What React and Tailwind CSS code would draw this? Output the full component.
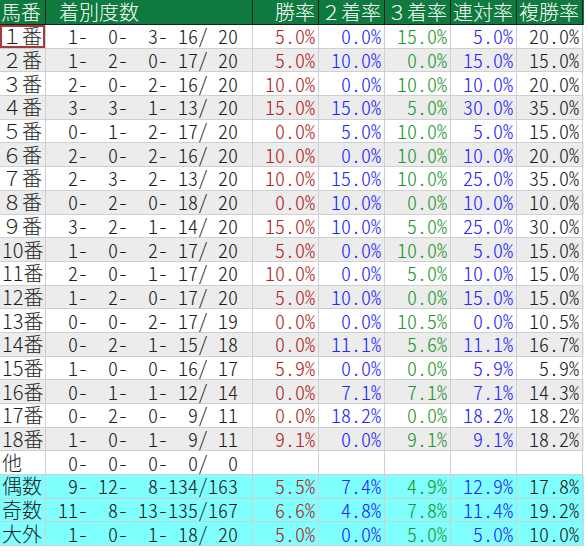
const rows = [
  ["１番", [1, 0, 3, 16, 20], ["5.0", "0.0", "15.0", "5.0", "20.0"]],
  ["２番", [1, 2, 0, 17, 20], ["5.0", "10.0", "0.0", "15.0", "15.0"]],
  ["３番", [2, 0, 2, 16, 20], ["10.0", "0.0", "10.0", "10.0", "20.0"]],
  ["４番", [3, 3, 1, 13, 20], ["15.0", "15.0", "5.0", "30.0", "35.0"]],
  ["５番", [0, 1, 2, 17, 20], ["0.0", "5.0", "10.0", "5.0", "15.0"]],
  ["６番", [2, 0, 2, 16, 20], ["10.0", "0.0", "10.0", "10.0", "20.0"]],
  ["７番", [2, 3, 2, 13, 20], ["10.0", "15.0", "10.0", "25.0", "35.0"]],
  ["８番", [0, 2, 0, 18, 20], ["0.0", "10.0", "0.0", "10.0", "10.0"]],
  ["９番", [3, 2, 1, 14, 20], ["15.0", "10.0", "5.0", "25.0", "30.0"]],
  ["10番", [1, 0, 2, 17, 20], ["5.0", "0.0", "10.0", "5.0", "15.0"]],
  ["11番", [2, 0, 1, 17, 20], ["10.0", "0.0", "5.0", "10.0", "15.0"]],
  ["12番", [1, 2, 0, 17, 20], ["5.0", "10.0", "0.0", "15.0", "15.0"]],
  ["13番", [0, 0, 2, 17, 19], ["0.0", "0.0", "10.5", "0.0", "10.5"]],
  ["14番", [0, 2, 1, 15, 18], ["0.0", "11.1", "5.6", "11.1", "16.7"]],
  ["15番", [1, 0, 0, 16, 17], ["5.9", "0.0", "0.0", "5.9", "5.9"]],
  ["16番", [0, 1, 1, 12, 14], ["0.0", "7.1", "7.1", "7.1", "14.3"]],
  ["17番", [0, 2, 0, 9, 11], ["0.0", "18.2", "0.0", "18.2", "18.2"]],
  ["18番", [1, 0, 1, 9, 11], ["9.1", "0.0", "9.1", "9.1", "18.2"]],
  ["他", [0, 0, 0, 0, 0], null],
  ["偶数", [9, 12, 8, 134, 163], ["5.5", "7.4", "4.9", "12.9", "17.8"], true],
  ["奇数", [11, 8, 13, 135, 167], ["6.6", "4.8", "7.8", "11.4", "19.2"], true],
  ["大外", [1, 0, 1, 18, 20], ["5.0", "0.0", "5.0", "5.0", "10.0"], true],
];

const rateColors = [
  "text-[#b22222]",
  "text-[#2424ff]",
  "text-[#23962b]",
  "text-[#2424ff]",
  "text-[#1c1c1c]",
];

const headers = ["勝率", "２着率", "３着率", "連対率", "複勝率"];

const cols = "grid grid-cols-[46px_207px_66px_66px_66px_66px_66px]";
// half-width digits so numbers line up like a fixed-pitch font
const half = "[font-feature-settings:'hwid']";

const Row = ({ row, index }) => {
  const [label, counts, rates, summary] = row;
  const bg = summary
    ? "bg-[#80ffff]"
    : index % 2 === 1
    ? "bg-[#ececec]"
    : "bg-white";
  const cell = "flex items-center h-[23.7px] leading-[22px] border-r border-b border-[#cfcfcf]";
  const [a, b, c, d, total] = counts;

  return (
    <div className={`${cols} ${bg}`}>
      <div className={`${cell} pl-[2px] relative`}>
        {index === 0 && (
          <div className="absolute inset-0 border-2 border-[#a83a3a]" />
        )}
        {label}
      </div>
      <div className={`${cell} ${half} pl-[2px] whitespace-pre text-[#1c1c1c]`}>
        <span className="w-[40px] text-right">{a}-</span>
        <span className="w-[40px] text-right">{b}-</span>
        <span className="w-[40px] text-right">{c}-</span>
        <span className="w-[40px] text-right">{d}/</span>
        <span className="w-[30px] text-right">{total}</span>
      </div>
      {rateColors.map((color, i) => (
        <div key={i} className={`${cell} ${half} justify-end pr-[3px] ${color}`}>
          {rates ? `${rates[i]}%` : ""}
        </div>
      ))}
    </div>
  );
};

export default function App() {
  return (
    <div className="w-[587px] h-[551px] bg-white font-['Noto_Sans_CJK_JP',sans-serif] font-light text-[20px] text-[#1c1c1c]">
      <div className="w-[584px]">
        <div className={`${cols} bg-[#0e7a3e] text-white`}>
          <div className="flex items-center h-[25px] leading-[22px] pl-[1px] border-r border-b border-[#1e1e1e]">
            馬番
          </div>
          <div className="flex items-center h-[25px] leading-[22px] pl-[13px] border-r border-b border-[#1e1e1e]">
            着別度数
          </div>
          {headers.map((h) => (
            <div
              key={h}
              className="flex items-center justify-end h-[25px] leading-[22px] pr-[3px] border-r border-b border-[#1e1e1e]"
            >
              {h}
            </div>
          ))}
        </div>
        {rows.map((row, i) => (
          <Row key={row[0]} row={row} index={i} />
        ))}
      </div>
    </div>
  );
}
